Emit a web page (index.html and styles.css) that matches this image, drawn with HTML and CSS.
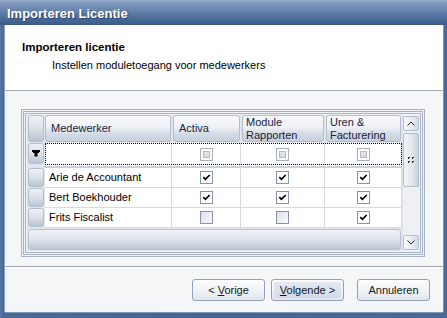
FILE: index.html
```html
<!DOCTYPE html>
<html>
<head>
<meta charset="utf-8">
<title>Importeren Licentie</title>
<link rel="stylesheet" href="styles.css">
</head>
<body>
<div class="window">
  <div class="titlebar"><span class="title">Importeren Licentie</span></div>
  <div class="frame">
    <div class="header">
      <div class="h-title">Importeren licentie</div>
      <div class="h-sub">Instellen moduletoegang voor medewerkers</div>
    </div>
    <div class="content">
      <div class="grid">
        <div class="table">
          <div class="row hdr">
            <div class="ind"></div>
            <div class="hcell c1"><span>Medewerker</span></div>
            <div class="hcell c2"><span>Activa</span></div>
            <div class="hcell c3"><span>Module<br>Rapporten</span></div>
            <div class="hcell c4"><span>Uren &amp;<br>Facturering</span></div>
          </div>
          <div class="row filter">
            <div class="ind icon">
              <svg width="8" height="7" viewBox="0 0 8 7"><path d="M0 0h8v2H0z M1 2h6v1H1z M2.5 3h3v3.5h-3z" fill="#000"/></svg>
            </div>
            <div class="fcells">
              <div class="cell c1"></div>
              <div class="cell c2 mid"><span class="cb dis"><span class="inner"></span></span></div>
              <div class="cell c3 mid"><span class="cb dis"><span class="inner"></span></span></div>
              <div class="cell c4 mid"><span class="cb dis"><span class="inner"></span></span></div>
            </div>
          </div>
          <div class="row sep"><div class="sep-ind"></div><div class="sepbar"></div></div>
          <div class="row data">
            <div class="ind"></div>
            <div class="cell c1 txt">Arie de Accountant</div>
            <div class="cell c2 mid"><span class="cb on"><svg width="11" height="11" viewBox="0 0 11 11"><path d="M2.3 5.2 L4.4 7.4 L8.7 3" stroke="#000" stroke-width="1.7" fill="none"/></svg></span></div>
            <div class="cell c3 mid"><span class="cb on"><svg width="11" height="11" viewBox="0 0 11 11"><path d="M2.3 5.2 L4.4 7.4 L8.7 3" stroke="#000" stroke-width="1.7" fill="none"/></svg></span></div>
            <div class="cell c4 mid"><span class="cb on"><svg width="11" height="11" viewBox="0 0 11 11"><path d="M2.3 5.2 L4.4 7.4 L8.7 3" stroke="#000" stroke-width="1.7" fill="none"/></svg></span></div>
          </div>
          <div class="row data">
            <div class="ind"></div>
            <div class="cell c1 txt">Bert Boekhouder</div>
            <div class="cell c2 mid"><span class="cb on"><svg width="11" height="11" viewBox="0 0 11 11"><path d="M2.3 5.2 L4.4 7.4 L8.7 3" stroke="#000" stroke-width="1.7" fill="none"/></svg></span></div>
            <div class="cell c3 mid"><span class="cb on"><svg width="11" height="11" viewBox="0 0 11 11"><path d="M2.3 5.2 L4.4 7.4 L8.7 3" stroke="#000" stroke-width="1.7" fill="none"/></svg></span></div>
            <div class="cell c4 mid"><span class="cb on"><svg width="11" height="11" viewBox="0 0 11 11"><path d="M2.3 5.2 L4.4 7.4 L8.7 3" stroke="#000" stroke-width="1.7" fill="none"/></svg></span></div>
          </div>
          <div class="row data">
            <div class="ind"></div>
            <div class="cell c1 txt">Frits Fiscalist</div>
            <div class="cell c2 mid"><span class="cb off"></span></div>
            <div class="cell c3 mid"><span class="cb off"></span></div>
            <div class="cell c4 mid"><span class="cb on"><svg width="11" height="11" viewBox="0 0 11 11"><path d="M2.3 5.2 L4.4 7.4 L8.7 3" stroke="#000" stroke-width="1.7" fill="none"/></svg></span></div>
          </div>
          <div class="footer"><div class="footbar"></div></div>
        </div>
        <div class="scroll">
          <div class="sbtn up"><svg width="8" height="5" viewBox="0 0 8 5"><path d="M0.5 4.5 L4 1 L7.5 4.5" stroke="#222" stroke-width="1" fill="none"/></svg></div>
          <div class="thumb"><svg width="6" height="6" viewBox="0 0 6 6"><path d="M0 0h2v1H0z M4 0h2v1H4z M0 1h1v1H0z M4 1h1v1H4z M0 4h2v1H0z M4 4h2v1H4z M0 5h1v1H0z M4 5h1v1H4z" fill="#333"/></svg></div>
          <div class="track"></div>
          <div class="sbtn down"><svg width="8" height="5" viewBox="0 0 8 5"><path d="M0.5 0.5 L4 4 L7.5 0.5" stroke="#222" stroke-width="1" fill="none"/></svg></div>
        </div>
      </div>
    </div>
    <div class="buttons">
      <div class="btn"><span class="label">&lt; <u>V</u>orige</span></div>
      <div class="btn default"><span class="face"><span class="label"><u>V</u>olgende &gt;</span></span></div>
      <div class="btn cancel"><span class="label">Annuleren</span></div>
    </div>
  </div>
</div>
</body>
</html>
```

FILE: styles.css
```css
html, body {
  margin: 0;
  padding: 0;
  background: #46658f;
}

body {
  font-family: "Liberation Sans", Arial, sans-serif;
  font-size: 11px;
  color: #000;
}

.window {
  width: 447px;
  height: 318px;
  display: flex;
  flex-direction: column;
  background: linear-gradient(90deg, #5a79a4 0, #4a6a96 3px, #46658f 50%, #4a6a96 100%);
  overflow: hidden;
}

.titlebar {
  height: 25px;
  flex: none;
  box-sizing: border-box;
  display: flex;
  align-items: center;
  padding-left: 7px;
  background: linear-gradient(#a3b6d1 0, #8aa2c4 1px, #6f8bb3 8px, #52729f 16px, #3b5a88 25px);
}

.title {
  color: #fff;
  font-weight: bold;
  font-size: 13px;
  text-shadow: 1px 1px 1px rgba(20, 35, 70, 0.6);
  margin-top: 1px;
}

.frame {
  flex: 1;
  display: flex;
  flex-direction: column;
  margin: 0 4px 6px 5px;
  background: #f5f6f8;
  box-shadow: -1px 0 0 #8ea4c2, 1px 0 0 #7f97b9, 0 1px 0 #7f97b9;
}

.header {
  flex: none;
  background: #fff;
  border-bottom: 1px solid #a3a8b0;
  padding: 15px 0 0 17px;
  box-sizing: content-box;
  height: 50px;
}

.h-title {
  font-weight: bold;
  font-size: 11.5px;
  line-height: 14px;
}

.h-sub {
  margin-top: 4px;
  margin-left: 30px;
  line-height: 14px;
}

.content {
  height: 175px;
  flex: none;
  box-sizing: border-box;
  padding: 24px 0 0 22px;
}

.grid {
  width: 392px;
  height: 136px;
  display: flex;
  background: #e2e6ec;
  box-shadow:
    0 0 0 1px #f1f3f6,
    0 0 0 2px #a7b2c2,
    0 0 0 3px #f1f3f6,
    0 0 0 4px #a7b2c2,
    0 0 0 5px #f1f3f6,
    0 0 0 6px #a7b2c2;
}

.table {
  width: 375px;
  display: flex;
  flex-direction: column;
}

.row {
  display: flex;
  flex: none;
}

.c1 { width: 128px; }
.c2 { width: 69px; }
.c3 { width: 84px; }
.c4 { width: 77px; }

.ind {
  width: 16px;
  margin: 1px 0 1px 1px;
  box-sizing: border-box;
  border: 1px solid #b4bfce;
  border-radius: 3px;
  background: linear-gradient(#eef1f5, #dde3ea 45%, #b9c4d4);
  flex: none;
}

.hdr {
  height: 28px;
}

.hdr .ind {
  margin: 0 0 1px 1px;
}

.hcell {
  box-sizing: border-box;
  margin: 0 1px 1px 1px;
  border: 1px solid #b3bece;
  border-radius: 3px;
  background: linear-gradient(#f8f9fb 0, #eef1f5 45%, #d5dce6 70%, #c7d0dc 100%);
  color: #18233f;
  display: flex;
  align-items: center;
  padding-left: 4px;
  line-height: 13px;
  flex: none;
}

.hcell.c1 { width: 126px; padding-left: 5px; }
.hcell.c2 { width: 67px; padding-left: 5px; }
.hcell.c3 { width: 82px; padding-left: 3px; }
.hcell.c4 { width: 75px; padding-left: 3px; }

.filter {
  height: 22px;
}

.filter .ind.icon {
  display: flex;
  align-items: center;
  justify-content: center;
  margin: 0 0 1px 1px;
}

.fcells {
  display: flex;
  background: #fff;
  outline: 1px dotted #000;
  outline-offset: -1px;
  margin-left: 1px;
}

.cell {
  box-sizing: border-box;
  border-right: 1px solid #d6dbe3;
  background: #fff;
  flex: none;
}

.fcells .c1 { width: 127px; }

.mid {
  display: flex;
  align-items: center;
  justify-content: center;
}

.sep {
  height: 3px;
}

.sep-ind {
  width: 17px;
  flex: none;
}

.sepbar {
  flex: 1;
  background: #c8d1dd;
  border-top: 1px solid #fff;
}

.data {
  height: 20px;
}

.data .ind {
  margin: 0 0 1px 1px;
}

.data .cell {
  border-bottom: 1px solid #d6dbe3;
}

.data .c1 {
  width: 127px;
  margin-left: 1px;
}

.txt {
  padding-left: 4px;
  line-height: 19px;
  white-space: nowrap;
}

.cb {
  display: block;
  width: 13px;
  height: 13px;
  box-sizing: border-box;
  border: 1px solid #8795ab;
  background: #fff;
  position: relative;
}

.cb svg {
  display: block;
}

.cb.off {
  background: linear-gradient(135deg, #dadfe6, #eef0f3 60%, #fbfbfc);
}

.cb.dis {
  border-color: #a7b0bd;
  padding: 2px;
}

.cb.dis .inner {
  display: block;
  width: 7px;
  height: 7px;
  box-sizing: border-box;
  border: 1px solid #b5bcc7;
  background: linear-gradient(#e4e7ec, #d3d8df);
}

.footer {
  flex: 1;
  display: flex;
  padding: 1px 1px 1px 1px;
}

.footbar {
  flex: 1;
  box-sizing: border-box;
  border: 1px solid #b7c1cf;
  border-radius: 3px;
  background: linear-gradient(#eff2f6 0, #e2e7ee 40%, #c9d2de 80%, #bcc6d5 100%);
}

.scroll {
  width: 16px;
  margin-left: 1px;
  display: flex;
  flex-direction: column;
  background: #eef1f4;
}

.sbtn {
  height: 15px;
  box-sizing: border-box;
  border: 1px solid #b6c0cd;
  border-radius: 2px;
  background: linear-gradient(90deg, #f6f8fa, #e6ebf0 60%, #d3dae4);
  display: flex;
  align-items: center;
  justify-content: center;
  flex: none;
}

.sbtn.up {
  margin-top: 1px;
}

.sbtn.down {
  margin-bottom: 1px;
}

.thumb {
  height: 54px;
  margin-top: 2px;
  box-sizing: border-box;
  border: 1px solid #b3bdcb;
  border-radius: 2px;
  background: linear-gradient(90deg, #f3f5f8, #e3e8ee 55%, #c9d1dd);
  display: flex;
  align-items: center;
  justify-content: center;
  flex: none;
}

.track {
  flex: 1;
}

.buttons {
  flex: 1;
  border-top: 1px solid #a3a8b0;
  box-shadow: inset 0 1px 0 #fff;
  display: flex;
  justify-content: flex-end;
  align-items: flex-start;
  padding: 12px 13px 0 0;
  gap: 6px;
}

.btn {
  width: 73px;
  height: 22px;
  box-sizing: border-box;
  border: 1px solid #94a1b5;
  border-radius: 3px;
  background: linear-gradient(#fdfdfe 0, #f1f3f6 50%, #e0e5ec 100%);
  display: flex;
  align-items: center;
  justify-content: center;
  color: #111827;
  line-height: 13px;
}

.label {
  white-space: pre;
}

.btn.default {
  padding: 2px;
}

.btn.default .face {
  display: flex;
  align-items: center;
  justify-content: center;
  width: 100%;
  height: 100%;
  background: linear-gradient(#e3e9f2, #d3dcea);
  border-radius: 1px;
}

.btn.cancel {
  margin-left: 7px;
}

u {
  text-decoration: underline;
  text-underline-offset: 1px;
}
```
